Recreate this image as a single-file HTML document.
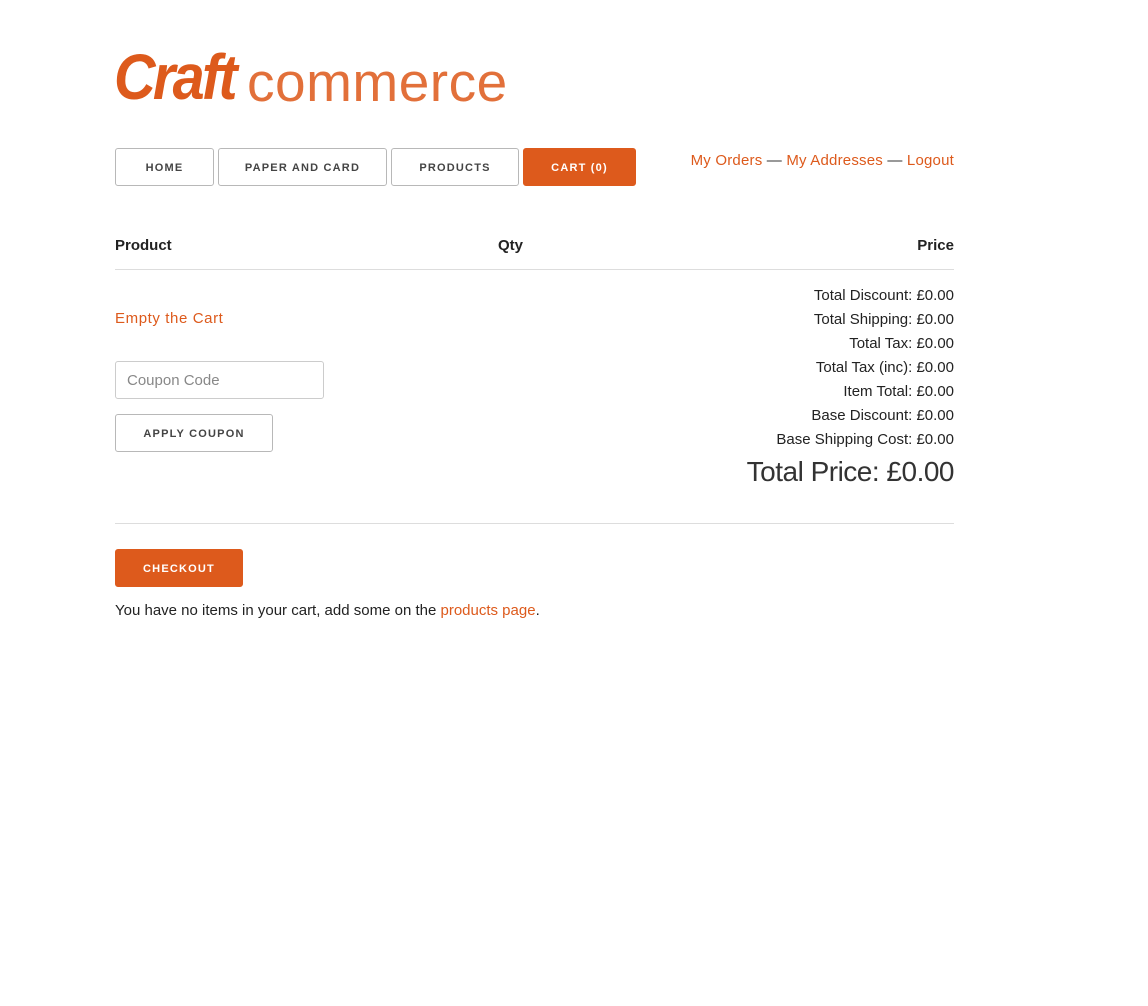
<!DOCTYPE html>
<html><head><meta charset="utf-8"><style>
*{box-sizing:border-box;margin:0;padding:0}
body{width:1148px;height:1006px;background:#fff;font-family:"Liberation Sans",sans-serif;color:#222;position:relative}
.o{color:#dd5a1c}
.abs{position:absolute}
.btn{position:absolute;height:38px;border:1px solid #b8b8b8;border-radius:3px;font-size:11px;font-weight:bold;letter-spacing:1.2px;color:#444;display:flex;align-items:center;justify-content:center;background:#fff;padding-top:2px}
.btn.on{background:#dd5a1c;border-color:#dd5a1c;color:#fff}
.tot{position:absolute;right:194px;font-size:15px;text-align:right;color:#222}
</style></head><body>
<div class="abs o" style="left:114px;top:40px;font-size:64px;font-style:italic;font-weight:bold;letter-spacing:-3px;transform:scaleX(0.9);transform-origin:left">Craft</div>
<div class="abs o" style="left:247px;top:50px;font-size:55px;letter-spacing:0.5px;color:#e2703a">commerce</div>
<div class="btn" style="left:115px;top:148px;width:99px">HOME</div>
<div class="btn" style="left:218px;top:148px;width:169px">PAPER AND CARD</div>
<div class="btn" style="left:391px;top:148px;width:128px">PRODUCTS</div>
<div class="btn on" style="left:523px;top:148px;width:113px">CART (0)</div>
<div class="abs" style="right:194px;top:152px;font-size:15px;color:#333;letter-spacing:0.2px"><span class="o">My Orders</span> — <span class="o">My Addresses</span> — <span class="o">Logout</span></div>
<div class="abs" style="left:115px;top:237px;font-size:15px;font-weight:bold">Product</div>
<div class="abs" style="left:498px;top:237px;font-size:15px;font-weight:bold">Qty</div>
<div class="abs" style="right:194px;top:237px;font-size:15px;font-weight:bold">Price</div>
<div class="abs" style="left:115px;top:269px;width:839px;height:1px;background:#ddd"></div>
<div class="abs o" style="left:115px;top:310px;font-size:15px;letter-spacing:0.6px">Empty the Cart</div>
<div class="abs" style="left:115px;top:361px;width:209px;height:38px;border:1px solid #ccc;border-radius:3px;font-size:15px;color:#888;padding:10px 0 0 11px">Coupon Code</div>
<div class="btn" style="left:115px;top:414px;width:158px">APPLY COUPON</div>
<div class="tot" style="top:287px">Total Discount: £0.00</div>
<div class="tot" style="top:311px">Total Shipping: £0.00</div>
<div class="tot" style="top:335px">Total Tax: £0.00</div>
<div class="tot" style="top:359px">Total Tax (inc): £0.00</div>
<div class="tot" style="top:383px">Item Total: £0.00</div>
<div class="tot" style="top:407px">Base Discount: £0.00</div>
<div class="tot" style="top:431px">Base Shipping Cost: £0.00</div>
<div class="tot" style="top:456px;font-size:28px;letter-spacing:-0.5px;color:#333">Total Price: £0.00</div>
<div class="abs" style="left:115px;top:523px;width:839px;height:1px;background:#ddd"></div>
<div class="btn on" style="left:115px;top:549px;width:128px">CHECKOUT</div>
<div class="abs" style="left:115px;top:602px;font-size:15px">You have no items in your cart, add some on the <span class="o">products page</span>.</div>
</body></html>
